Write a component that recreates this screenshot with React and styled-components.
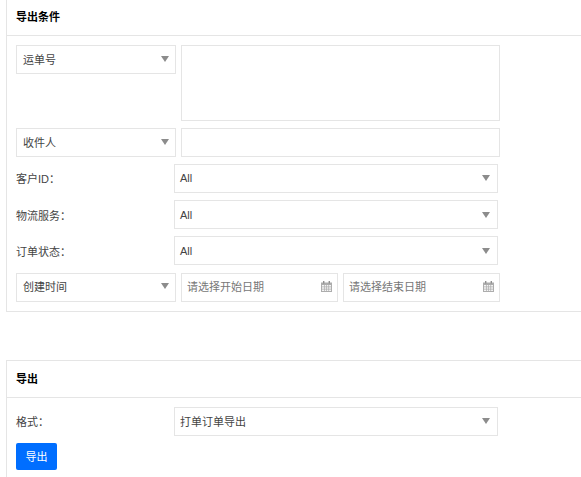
import React from "react";
import styled, { createGlobalStyle } from "styled-components";

const Global = createGlobalStyle`
  html, body { margin: 0; padding: 0; background: #fff; overflow: hidden; height: 100%; }
  body { font-family: "Liberation Sans", "Noto Sans CJK SC", sans-serif; font-size: 11px; color: #444; }
  * { box-sizing: border-box; }
`;

const Page = styled.div`
  width: 581px;
  height: 477px;
  overflow: hidden;
  padding-left: 6px;
  display: flex;
  flex-direction: column;
  gap: 48px;
`;

const Card = styled.section`
  width: 640px;
  flex: none;
  background: #fff;
  border: 1px solid #e5e5e5;
  border-top-width: ${(p) => (p.$clipped ? 0 : 1)}px;
`;

const CardHeader = styled.h2`
  margin: 0;
  height: ${(p) => (p.$clipped ? 36 : 37)}px;
  padding: 0 0 3px 9px;
  display: flex;
  align-items: center;
  border-bottom: 1px solid #e5e5e5;
  font-size: 11px;
  font-weight: 700;
  color: #000;
`;

const CardBody = styled.div`
  padding: 9px;
  display: flex;
  flex-direction: column;
  gap: 7px;
`;

const Row = styled.div`
  display: flex;
  align-items: flex-start;
  gap: 5px;
`;

const FieldRow = styled.div`
  display: flex;
  align-items: center;
  height: 29px;
`;

const Label = styled.label`
  width: 158px;
  flex: none;
  padding-top: ${(p) => p.$drop}px;
  padding-bottom: 1px;
  color: #444;
`;

const SelectBox = styled.div`
  width: ${(p) => p.$width}px;
  height: 29px;
  flex: none;
  display: flex;
  align-items: center;
  justify-content: space-between;
  padding: ${(p) => p.$drop}px ${(p) => p.$padRight}px ${(p) => p.$lift}px ${(p) => p.$pad}px;
  border: 1px solid #e5e5e5;
  color: #444;
  background: #fff;
`;

const Caret = styled.span`
  width: 0;
  height: 0;
  margin-top: -1px;
  border-left: 4.5px solid transparent;
  border-right: 4.5px solid transparent;
  border-top: 6px solid #8c8c8c;
`;

const TextArea = styled.div`
  width: 319px;
  height: ${(p) => p.$h}px;
  flex: none;
  border: 1px solid #e5e5e5;
  background: #fff;
`;

const DateRow = styled(Row)`
  margin-top: 1px;
`;

const DateBox = styled.div`
  width: 157px;
  height: 29px;
  flex: none;
  display: flex;
  align-items: center;
  justify-content: space-between;
  padding: 0 5px 3px;
  border: 1px solid #e5e5e5;
  color: #777;
  background: #fff;
`;

const DateIcon = styled.svg`
  width: 11px;
  height: 11px;
  flex: none;
`;

const Button = styled.button`
  width: 41px;
  height: 27px;
  padding: 0 0 1px;
  border: 0;
  border-radius: 2px;
  background: #006eff;
  color: #fff;
  font: inherit;
`;

const Calendar = () => (
  <DateIcon viewBox="0 0 11 11" aria-hidden="true">
    <path d="M0 1.5h11V11H0z" fill="#adadad" />
    <path d="M2 0h1.4v2.5H2zM7.6 0H9v2.5H7.6z" fill="#8f8f8f" />
    <path
      d="M1 4h2v1.5H1zM3.7 4h1.5v1.5H3.7zM5.9 4h1.5v1.5H5.9zM8.1 4H10v1.5H8.1zM1 6.2h2v1.5H1zM3.7 6.2h1.5v1.5H3.7zM5.9 6.2h1.5v1.5H5.9zM8.1 6.2H10v1.5H8.1zM1 8.4h2V10H1zM3.7 8.4h1.5V10H3.7zM5.9 8.4h1.5V10H5.9zM8.1 8.4H10V10H8.1z"
      fill="#f4f4f4"
    />
  </DateIcon>
);

const Select = ({ children, width = 160, pad = 6, padRight = 6, drop = 0, lift = 1 }) => (
  <SelectBox $width={width} $pad={pad} $padRight={padRight} $drop={drop} $lift={lift}>
    <span>{children}</span>
    <Caret />
  </SelectBox>
);

const Field = ({ label, drop = 0, children }) => (
  <FieldRow>
    <Label $drop={drop}>{label}</Label>
    <Select width={324} pad={5} padRight={7} drop={drop}>{children}</Select>
  </FieldRow>
);

const DateInput = ({ children }) => (
  <DateBox>
    <span>{children}</span>
    <Calendar />
  </DateBox>
);

export default function App() {
  return (
    <Page>
      <Global />
      <Card $clipped>
        <CardHeader $clipped>导出条件</CardHeader>
        <CardBody>
          <Row>
            <Select>运单号</Select>
            <TextArea $h={76} />
          </Row>
          <Row>
            <Select>收件人</Select>
            <TextArea $h={29} />
          </Row>
          <Field label="客户ID：">All</Field>
          <Field label="物流服务：" drop={2}>All</Field>
          <Field label="订单状态：" drop={2}>All</Field>
          <DateRow>
            <Select lift={3}>创建时间</Select>
            <DateInput>请选择开始日期</DateInput>
            <DateInput>请选择结束日期</DateInput>
          </DateRow>
        </CardBody>
      </Card>
      <Card>
        <CardHeader>导出</CardHeader>
        <CardBody>
          <Field label="格式：">打单订单导出</Field>
          <Button>导出</Button>
        </CardBody>
      </Card>
    </Page>
  );
}
